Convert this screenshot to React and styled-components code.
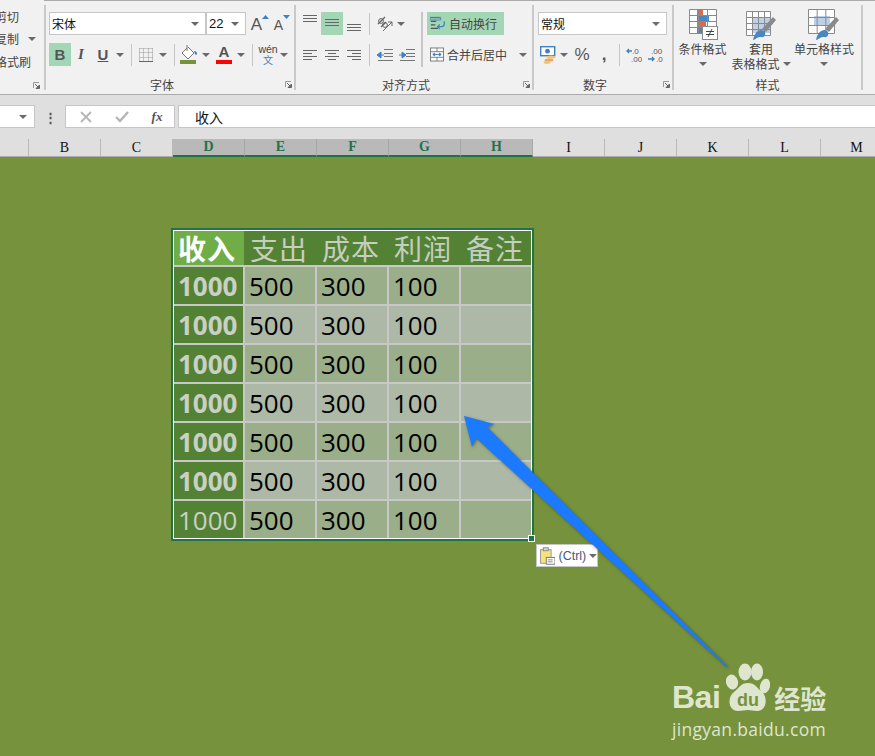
import React from 'react';
import styled, { createGlobalStyle } from 'styled-components';

const CJK = `"Noto Sans CJK SC", "Liberation Sans", sans-serif`;

const Global = createGlobalStyle`
  html, body {
    margin: 0;
    padding: 0;
    background: #76923c;
  }
  * { box-sizing: border-box; }
`;

const Page = styled.div`
  width: 875px;
  height: 756px;
  overflow: hidden;
  display: flex;
  flex-direction: column;
  font-family: ${CJK};
`;

/* ribbon */
const Ribbon = styled.div`
  height: 95px;
  flex-shrink: 0;
  display: flex;
  background: #f1f1f1;
  border-bottom: 1px solid #ababab;
`;
const ClipGroup = styled.div`
  width: 44px;
  flex-shrink: 0;
  overflow: hidden;
  display: flex;
  flex-direction: column;
  padding-top: 5px;
`;
const ClipItem = styled.div`
  height: 22.5px;
  margin-left: -5px;
  display: flex;
  align-items: center;
  font-size: 12px;
  color: #444;
  white-space: nowrap;
`;
const ClipFoot = styled.div`
  margin-top: auto;
  height: 18px;
  display: flex;
  justify-content: flex-end;
  align-items: center;
  padding-right: 2px;
`;
const Tabs = styled.div`
  flex: 1;
  display: flex;
  border-top: 1px solid #ababab;
`;
const Divider = styled.div`
  width: 2px;
  flex-shrink: 0;
  margin: 4px 0 4px;
  background: #c9c9c9;
`;
const Group = styled.div`
  width: ${p => p.$w}px;
  flex-shrink: 0;
  display: flex;
  flex-direction: column;
`;
const Body = styled.div`
  display: flex;
  padding: 11px 0 0 ${p => p.$pad || 0}px;
  height: 74px;
`;
const Col = styled.div`
  display: flex;
  flex-direction: column;
  gap: 8px;
`;
const Row = styled.div`
  display: flex;
  align-items: center;
  height: 23px;
`;
const Foot = styled.div`
  height: 18px;
  display: flex;
  align-items: center;
`;
const GroupLabel = styled.div`
  flex: 1;
  text-align: center;
  font-size: 12px;
  color: #444;
`;
const LauncherBox = styled.svg`
  width: 7px;
  height: 7px;
  margin: 0 2px 0 7px;
  flex-shrink: 0;
`;
const Select = styled.div`
  width: ${p => p.$w}px;
  height: 23px;
  flex-shrink: 0;
  background: #fff;
  border: 1px solid #c6c6c6;
  display: flex;
  align-items: center;
  justify-content: space-between;
  padding: 0 6px 0 2px;
  font-size: 12px;
  color: #111;
`;
const SizeText = styled.span`
  font-family: "Liberation Sans", sans-serif;
  font-size: 13px;
`;
const Tool = styled.div`
  width: ${p => p.$w}px;
  height: 23px;
  margin-left: ${p => p.$ml || 0}px;
  flex-shrink: 0;
  display: flex;
  align-items: center;
  justify-content: center;
  color: #555;
  background: ${p => (p.$on ? '#a3d6b5' : 'transparent')};
`;
const LetterTool = styled(Tool)`
  font-family: ${p => (p.$serif ? '"Liberation Serif"' : '"Liberation Sans"')}, sans-serif;
  font-size: ${p => p.$size || 15}px;
  font-weight: ${p => (p.$bold ? 700 : 400)};
  font-style: ${p => (p.$italic ? 'italic' : 'normal')};
  text-decoration: ${p => (p.$under ? 'underline' : 'none')};
`;
const GrowLetter = styled.span`
  font-family: "Liberation Sans", sans-serif;
  font-size: ${p => p.$size}px;
  color: #555;
  line-height: 1;
  margin-top: 2px;
`;
const ColorLetter = styled.div`
  display: flex;
  flex-direction: column;
  align-items: center;
  font-family: "Liberation Sans", sans-serif;
  font-weight: 700;
  font-size: 15px;
  line-height: 14px;
  color: #555;
`;
const ColorBar = styled.div`
  width: 16px;
  height: 4px;
  margin-top: 1px;
  background: ${p => p.$color};
`;
const WenStack = styled.div`
  display: flex;
  flex-direction: column;
  align-items: center;
  line-height: 1;
`;
const WenTop = styled.span`
  font-family: "Liberation Sans", sans-serif;
  font-size: 10.5px;
  color: #444;
`;
const WenBottom = styled.span`
  font-size: 10px;
  color: #3f80c0;
`;
const VSep = styled.div`
  width: 1px;
  height: 22px;
  flex-shrink: 0;
  background: #c6c6c6;
`;
const TallSep = styled.div`
  width: 2px;
  height: 55px;
  flex-shrink: 0;
  background: #c6c6c6;
`;
const WrapCol = styled(Col)`
  padding-left: 4px;
`;
const TextTool = styled.div`
  width: ${p => p.$w}px;
  height: 23px;
  display: flex;
  align-items: center;
  gap: 3px;
  padding-left: 3px;
  font-size: 12px;
  color: #444;
  white-space: nowrap;
  background: ${p => (p.$on ? '#a3d6b5' : 'transparent')};
`;
const MergeCaret = styled.span`
  display: flex;
  margin-left: 9px;
`;
const BigRow = styled.div`
  display: flex;
  height: 74px;
  margin-top: -3px;
`;
const BigButton = styled.div`
  width: ${p => p.$w}px;
  flex-shrink: 0;
  display: flex;
  flex-direction: column;
  align-items: center;
  font-size: 12px;
  color: #444;
  line-height: 15px;
`;
const BigIcon = styled.svg`
  width: 32px;
  height: 32px;
  flex-shrink: 0;
`;
const BigLine = styled.div`
  height: 15px;
  display: flex;
  align-items: center;
  justify-content: center;
  gap: 3px;
  white-space: nowrap;
`;

/* formula bar */
const FormulaBar = styled.div`
  height: 33px;
  flex-shrink: 0;
  display: flex;
  align-items: flex-end;
  background: #dfdfdf;
`;
const NameBox = styled.div`
  width: 35px;
  height: 23px;
  background: #fff;
  border: 1px solid #c6c6c6;
  border-left: 0;
  display: flex;
  align-items: center;
  justify-content: flex-end;
  padding-right: 7px;
`;
const Grip = styled.div`
  width: 30px;
  height: 23px;
  display: flex;
  align-items: center;
  justify-content: center;
  color: #555;
  font-size: 13px;
  font-weight: 700;
`;
const FxBox = styled.div`
  width: 110px;
  height: 23px;
  background: #fff;
  border: 1px solid #c6c6c6;
  display: flex;
  align-items: center;
  justify-content: space-around;
  padding-left: 2px;
  flex-shrink: 0;
`;
const FxText = styled.span`
  font-family: "Liberation Serif", serif;
  font-style: italic;
  font-weight: 700;
  font-size: 13px;
  color: #555;
`;
const FormulaInput = styled.div`
  flex: 1;
  height: 23px;
  margin-left: 3px;
  background: #fff;
  border: 1px solid #c6c6c6;
  border-right: 0;
  display: flex;
  align-items: center;
  padding-left: 16px;
  font-size: 14px;
  color: #111;
`;

/* column heads */
const ColHeads = styled.div`
  height: 29px;
  flex-shrink: 0;
  display: flex;
  align-items: flex-end;
  background: #dfdfdf;
`;
const ColCell = styled.div`
  width: ${p => p.$w || 72}px;
  height: 18px;
  flex-shrink: 0;
  display: flex;
  align-items: center;
  justify-content: center;
  font-family: "Liberation Serif", serif;
  font-size: 14px;
  font-weight: ${p => (p.$on ? 700 : 400)};
  color: ${p => (p.$on ? '#217346' : '#111')};
  background: ${p => (p.$on ? '#b9b9b9' : 'transparent')};
  border-right: 1px solid ${p => (p.$on ? '#a8a8a8' : '#b9b9b9')};
  border-bottom: ${p => (p.$on ? '2px solid #217346' : '1px solid #ababab')};
`;

/* sheet */
const Sheet = styled.div`
  flex: 1;
  position: relative;
  background: #76923c;
  padding: 71px 0 0 171px;
`;
const Selection = styled.div`
  position: relative;
  width: 363px;
  border: 2px solid #217346;
`;
const TableGrid = styled.div`
  border: 1px solid #fff;
  display: grid;
  grid-template-columns: 69px repeat(4, 70px);
  grid-template-rows: 34px repeat(7, 37px);
  gap: 2px;
  background: #c8c8c8;
`;
const HeadRow = styled.div`
  grid-column: 1 / -1;
  display: grid;
  grid-template-columns: 70px repeat(4, 72px);
  background: #548235;
`;
const HeadCell = styled.div`
  display: flex;
  align-items: center;
  padding-left: ${p => (p.$on ? 4 : 6)}px;
  font-size: 28px;
  line-height: 1;
  letter-spacing: 1px;
  font-weight: ${p => (p.$on ? 700 : 400)};
  color: ${p => (p.$on ? '#fff' : '#c6cec0')};
  background: ${p => (p.$on ? '#70ad47' : 'transparent')};
  white-space: nowrap;
`;
const Cell = styled.div`
  display: flex;
  align-items: center;
  padding-left: 4px;
  font-family: "Open Sans", sans-serif;
  font-size: 26px;
  color: #000;
  background: ${p => (p.$alt ? '#adb9a6' : '#9bae8a')};
`;
const FirstCell = styled(Cell)`
  font-weight: ${p => (p.$thin ? 400 : 700)};
  color: #cbd0c6;
  background: #548235;
`;
const Handle = styled.div`
  position: absolute;
  right: -3px;
  bottom: -3px;
  width: 7px;
  height: 7px;
  background: #217346;
  border: 1px solid #fff;
`;
const PasteTag = styled.div`
  position: absolute;
  left: 363px;
  top: 314px;
  width: 62px;
  height: 23px;
  background: #fff;
  border: 1px solid #c6c6c6;
  display: flex;
  align-items: center;
  gap: 3px;
  padding-left: 3px;
  font-family: "Liberation Sans", sans-serif;
  font-size: 12.5px;
  color: #4a5a78;
  white-space: nowrap;
`;
const ArrowLayer = styled.svg`
  position: absolute;
  left: 0;
  top: 0;
  width: 875px;
  height: 599px;
  pointer-events: none;
`;
const Watermark = styled.div`
  position: absolute;
  left: 672px;
  top: 506px;
  width: 156px;
  display: flex;
  flex-direction: column;
  color: #dfe6cf;
`;
const LogoRow = styled.div`
  display: flex;
  align-items: flex-end;
  height: 49px;
`;
const LogoBai = styled.span`
  font-family: "Liberation Sans", sans-serif;
  font-weight: 700;
  font-size: 32px;
  line-height: 29px;
  margin-right: 6px;
  letter-spacing: -0.5px;
`;
const Paw = styled.svg`
  width: 44px;
  height: 49px;
  flex-shrink: 0;
`;
const LogoJing = styled.span`
  font-size: 26px;
  font-weight: 700;
  line-height: 29px;
  margin-left: 4px;
  white-space: nowrap;
`;
const LogoUrl = styled.div`
  font-family: "Open Sans", sans-serif;
  font-size: 17.5px;
  line-height: 20px;
  margin-top: 7px;
  letter-spacing: 0.3px;
  white-space: nowrap;
`;

const Caret = () => (
  <svg width="8" height="4" viewBox="0 0 8 4">
    <path d="M0 0h8L4 4z" fill="#6a6a6a" />
  </svg>
);
const Launcher = () => (
  <LauncherBox viewBox="0 0 7 7">
    <path d="M.5 6V.5H6" fill="none" stroke="#999" />
    <path d="M2 2l3 3M6.5 3v3.5H3z" stroke="#666" fill="#666" />
  </LauncherBox>
);
const Lines = ({ rows, w = 14 }) => (
  <svg width={w} height="23" viewBox={`0 0 ${w} 23`}>
    {rows.map(([x1, x2, y]) => (
      <path key={y} d={`M${x1} ${y + 0.5}H${x2}`} stroke="#666" />
    ))}
  </svg>
);
const Tri = ({ up, color = '#3f80c0' }) => (
  <svg width="7" height="4" viewBox="0 0 7 4" style={{ alignSelf: 'flex-start', marginTop: 3 }}>
    <path d={up ? 'M0 4h7L3.5 0z' : 'M0 0h7L3.5 4z'} fill={color} />
  </svg>
);
const BorderIcon = () => (
  <svg width="14" height="14" viewBox="0 0 14 14">
    <path d="M.5.5h13M.5 4.5h13M.5 9.5h13M.5.5v13M4.5.5v13M9.5.5v13M13.5.5v13" stroke="#999" strokeDasharray="1 1" />
    <path d="M0 13.5h14" stroke="#666" />
  </svg>
);
const FillIcon = () => (
  <svg width="18" height="19" viewBox="0 0 18 19">
    <path d="M8 2l6 6-6 6-6-6 5-5" fill="#fff" stroke="#777" />
    <path d="M7 0v6" stroke="#777" />
    <path d="M14 6c2 0 3 1 3 3 0 1-2 1-2 0z" fill="#3f80c0" />
    <rect x="0" y="15" width="16" height="4" fill="#76923c" />
  </svg>
);
const OrientIcon = () => (
  <svg width="18" height="18" viewBox="0 0 18 18">
    <path d="M2 9l7-7M5 12l5-5" stroke="#666" strokeWidth="1.4" fill="none" />
    <circle cx="5" cy="6" r="2.4" fill="none" stroke="#666" />
    <circle cx="9" cy="10" r="2.4" fill="none" stroke="#666" />
    <path d="M7 16l9-9M12 7h4v4" stroke="#666" fill="none" />
  </svg>
);
const IndentIcon = ({ right }) => (
  <svg width="16" height="12" viewBox="0 0 16 12">
    <path d="M7 .5h9M7 4.5h9M7 7.5h9M1 11.5h15" stroke="#777" />
    {right
      ? <path d="M0 6h3V3l4 3-4 3V6" fill="#3f80c0" stroke="#3f80c0" />
      : <path d="M7 6H4V3L0 6l4 3V6" fill="#3f80c0" stroke="#3f80c0" />}
  </svg>
);
const WrapIcon = () => (
  <svg width="16" height="16" viewBox="0 0 18 16">
    <path d="M1 1h10M1 5h6M1 9h5M1 13h8" stroke="#555" strokeWidth="1.3" fill="none" />
    <path d="M0 .5h12v3H0z" fill="none" stroke="#3f80c0" />
    <path d="M16 5v3c0 2-1 3-3 3H9M11 8.5L8.5 11l2.5 2.5" stroke="#3f80c0" strokeWidth="1.4" fill="none" />
  </svg>
);
const MergeIcon = () => (
  <svg width="15" height="15" viewBox="0 0 15 15">
    <rect x=".5" y=".5" width="14" height="14" fill="#fff" stroke="#777" />
    <path d="M.5 4.5h14M.5 10.5h14M7.5.5v4M7.5 10.5v4" stroke="#777" />
    <path d="M3 7.5h9M3 7.5l2-1.5v3zM12 7.5l-2-1.5v3z" stroke="#3f80c0" fill="#3f80c0" />
  </svg>
);
const CurrencyIcon = () => (
  <svg width="18" height="18" viewBox="0 0 18 18">
    <rect x=".7" y=".7" width="14" height="9" fill="#fff" stroke="#3f80c0" strokeWidth="1.4" />
    <circle cx="7.5" cy="5.2" r="2.4" fill="#3f80c0" />
    <ellipse cx="11" cy="11" rx="4.5" ry="1.6" fill="#f2c27a" />
    <ellipse cx="9" cy="14" rx="4.5" ry="1.6" fill="#e9a85a" />
    <ellipse cx="7" cy="16.5" rx="3.5" ry="1.4" fill="#f2c27a" />
  </svg>
);
const DecIcon = ({ more }) => (
  <svg width="16" height="16" viewBox="0 0 16 16" fontFamily="Liberation Sans, sans-serif" fontSize="8" fill="#555">
    {more ? (
      <>
        <text x="6" y="7">.0</text>
        <text x="5" y="15">.00</text>
        <path d="M6 4H1M3 2L1 4l2 2" stroke="#3f80c0" fill="none" strokeWidth="1.3" />
      </>
    ) : (
      <>
        <text x="3" y="7">.00</text>
        <text x="8" y="15">.0</text>
        <path d="M0 12h6M4 10l2 2-2 2" stroke="#3f80c0" fill="none" strokeWidth="1.3" />
      </>
    )}
  </svg>
);
const Cross = () => (
  <svg width="12" height="12" viewBox="0 0 12 12">
    <path d="M1 1l10 10M11 1L1 11" stroke="#b5b5b5" strokeWidth="1.8" />
  </svg>
);
const Check = () => (
  <svg width="14" height="12" viewBox="0 0 14 12">
    <path d="M1 6l4 4 8-9" stroke="#b5b5b5" strokeWidth="2.4" fill="none" />
  </svg>
);
const GridLines = ({ x, y, w, h, cols, rows }) => (
  <path
    d={
      [...Array(cols + 1)].map((_, i) => `M${x + (i * w) / cols} ${y}v${h}`).join('') +
      [...Array(rows + 1)].map((_, i) => `M${x} ${y + (i * h) / rows}h${w}`).join('')
    }
    stroke="#8a8a8a"
    fill="none"
  />
);
const CondIcon = () => (
  <BigIcon viewBox="0 0 32 32">
    <rect x="2.5" y=".5" width="27" height="24" fill="#fff" />
    <rect x="10" y="1" width="6" height="6" fill="#e0694a" />
    <rect x="10" y="7" width="12" height="6" fill="#4a86c0" />
    <rect x="10" y="13" width="9" height="6" fill="#e0694a" />
    <rect x="10" y="19" width="5" height="6" fill="#4a86c0" />
    <GridLines x={2.5} y={0.5} w={27} h={24} cols={3} rows={4} />
    <rect x="15.5" y="17.5" width="15" height="13" fill="#fff" stroke="#8a8a8a" />
    <path d="M19 22.5h8M19 25.5h8M25 20l-4 8" stroke="#444" fill="none" />
  </BigIcon>
);
const TableIcon = () => (
  <BigIcon viewBox="0 0 32 32">
    <rect x="1.5" y="2.5" width="24" height="24" fill="#fff" />
    <rect x="7" y="8" width="18" height="16" fill="#bcd0e6" />
    <GridLines x={1.5} y={2.5} w={24} h={24} cols={4} rows={4} />
    <path d="M17 20L28 8l3 3-10 12z" fill="#8a8a8a" />
    <path d="M8 31c1-5 3-9 8-10 3 0 5 2 4 5-1 3-3 2-5 2-3 0-5 3-7 3z" fill="#4a86c0" />
  </BigIcon>
);
const CellStyleIcon = () => (
  <BigIcon viewBox="0 0 32 32">
    <rect x=".5" y=".5" width="26" height="24" fill="#fff" />
    <rect x="6" y="7" width="16" height="10" fill="#bcd0e6" />
    <GridLines x={0.5} y={0.5} w={26} h={24} cols={3} rows={3} />
    <path d="M17 20L28 8l3 3-10 12z" fill="#8a8a8a" />
    <path d="M8 31c1-5 3-9 8-10 3 0 5 2 4 5-1 3-3 2-5 2-3 0-5 3-7 3z" fill="#4a86c0" />
  </BigIcon>
);
const ClipIcon = () => (
  <svg width="16" height="18" viewBox="0 0 16 18">
    <rect x=".5" y="2.5" width="11" height="14" fill="#f8e27a" stroke="#999" />
    <rect x="3.5" y=".5" width="5" height="3" fill="#ddd" stroke="#888" />
    <rect x="6.5" y="10.5" width="9" height="7" fill="#fff" stroke="#777" />
    <path d="M8 13h5M8 15h5" stroke="#888" />
  </svg>
);

const heads = ['支出', '成本', '利润', '备注'];
const rowsData = [0, 1, 2, 3, 4, 5, 6];
const columns = ['D', 'E', 'F', 'G', 'H'];

export default function App() {
  return (
    <Page>
      <Global />
      <Ribbon>
        <ClipGroup>
          <ClipItem>剪切</ClipItem>
          <ClipItem>复制<Tool $w={14} $ml={6}><Caret /></Tool></ClipItem>
          <ClipItem>格式刷</ClipItem>
          <ClipFoot><Launcher /></ClipFoot>
        </ClipGroup>
        <Tabs>
          <Divider />
          <Group $w={248}>
            <Body $pad={3}>
              <Col>
                <Row>
                  <Select $w={157}>宋体<Caret /></Select>
                  <Select $w={40}><SizeText>22</SizeText><Caret /></Select>
                  <Tool $w={22} $ml={3}><GrowLetter $size={17}>A</GrowLetter><Tri up /></Tool>
                  <Tool $w={22}><GrowLetter $size={14}>A</GrowLetter><Tri /></Tool>
                </Row>
                <Row>
                  <LetterTool $w={22} $on $bold>B</LetterTool>
                  <LetterTool $w={20} $serif $italic $bold>I</LetterTool>
                  <LetterTool $w={24} $under $bold>U</LetterTool>
                  <Tool $w={10}><Caret /></Tool>
                  <Tool $w={12}><VSep /></Tool>
                  <Tool $w={18}><BorderIcon /></Tool>
                  <Tool $w={16}><Caret /></Tool>
                  <Tool $w={6}><VSep /></Tool>
                  <Tool $w={24}><FillIcon /></Tool>
                  <Tool $w={10}><Caret /></Tool>
                  <Tool $w={26}><ColorLetter>A<ColorBar $color="#ff0000" /></ColorLetter></Tool>
                  <Tool $w={8}><Caret /></Tool>
                  <Tool $w={14}><VSep /></Tool>
                  <Tool $w={18}><WenStack><WenTop>wén</WenTop><WenBottom>文</WenBottom></WenStack></Tool>
                  <Tool $w={14}><Caret /></Tool>
                </Row>
              </Col>
            </Body>
            <Foot><GroupLabel>字体</GroupLabel><Launcher /></Foot>
          </Group>
          <Divider />
          <Group $w={236}>
            <Body $pad={5}>
              <Col>
                <Row>
                  <Tool $w={18}><Lines rows={[[0, 14, 3], [0, 14, 6], [0, 14, 9]]} /></Tool>
                  <Tool $w={22} $ml={2} $on><Lines rows={[[0, 14, 7], [0, 14, 10], [0, 14, 13]]} /></Tool>
                  <Tool $w={22}><Lines rows={[[0, 14, 12], [0, 14, 15], [0, 14, 18]]} /></Tool>
                  <Tool $w={8}><VSep /></Tool>
                  <Tool $w={24}><OrientIcon /></Tool>
                  <Tool $w={8}><Caret /></Tool>
                  <Tool $w={16} />
                </Row>
                <Row>
                  <Tool $w={18}><Lines rows={[[0, 14, 7], [0, 9, 10], [0, 14, 13], [0, 9, 16]]} /></Tool>
                  <Tool $w={26}><Lines rows={[[0, 14, 7], [3, 11, 10], [0, 14, 13], [3, 11, 16]]} /></Tool>
                  <Tool $w={18}><Lines rows={[[0, 14, 7], [5, 14, 10], [0, 14, 13], [5, 14, 16]]} /></Tool>
                  <Tool $w={12}><VSep /></Tool>
                  <Tool $w={20}><IndentIcon /></Tool>
                  <Tool $w={24}><IndentIcon right /></Tool>
                </Row>
              </Col>
              <TallSep />
              <WrapCol>
                <Row>
                  <TextTool $w={77} $on><WrapIcon />自动换行</TextTool>
                </Row>
                <Row>
                  <TextTool $w={100}><MergeIcon />合并后居中<MergeCaret><Caret /></MergeCaret></TextTool>
                </Row>
              </WrapCol>
            </Body>
            <Foot><GroupLabel>对齐方式</GroupLabel><Launcher /></Foot>
          </Group>
          <Divider />
          <Group $w={138}>
            <Body $pad={4}>
              <Col>
                <Row>
                  <Select $w={129}>常规<Caret /></Select>
                </Row>
                <Row>
                  <Tool $w={22}><CurrencyIcon /></Tool>
                  <Tool $w={8}><Caret /></Tool>
                  <LetterTool $w={28} $size={17}>%</LetterTool>
                  <LetterTool $w={16} $size={17} $bold>,</LetterTool>
                  <Tool $w={14}><VSep /></Tool>
                  <Tool $w={16}><DecIcon more /></Tool>
                  <Tool $w={22} $ml={3}><DecIcon /></Tool>
                </Row>
              </Col>
            </Body>
            <Foot><GroupLabel>数字</GroupLabel><Launcher /></Foot>
          </Group>
          <Divider />
          <Group $w={187}>
            <Body>
              <BigRow>
                <BigButton $w={57}>
                  <CondIcon />
                  <BigLine>条件格式</BigLine>
                  <BigLine><Caret /></BigLine>
                </BigButton>
                <BigButton $w={60}>
                  <TableIcon />
                  <BigLine>套用</BigLine>
                  <BigLine>表格格式<Caret /></BigLine>
                </BigButton>
                <BigButton $w={66}>
                  <CellStyleIcon />
                  <BigLine>单元格样式</BigLine>
                  <BigLine><Caret /></BigLine>
                </BigButton>
              </BigRow>
            </Body>
            <Foot><GroupLabel>样式</GroupLabel></Foot>
          </Group>
          <Divider />
        </Tabs>
      </Ribbon>

      <FormulaBar>
        <NameBox><Caret /></NameBox>
        <Grip>⋮</Grip>
        <FxBox>
          <Cross />
          <Check />
          <FxText>fx</FxText>
        </FxBox>
        <FormulaInput>收入</FormulaInput>
      </FormulaBar>

      <ColHeads>
        <ColCell $w={29} />
        <ColCell>B</ColCell>
        <ColCell>C</ColCell>
        {columns.map(c => <ColCell key={c} $on>{c}</ColCell>)}
        <ColCell>I</ColCell>
        <ColCell>J</ColCell>
        <ColCell>K</ColCell>
        <ColCell>L</ColCell>
        <ColCell>M</ColCell>
      </ColHeads>

      <Sheet>
        <Selection>
          <TableGrid>
            <HeadRow>
              <HeadCell $on>收入</HeadCell>
              {heads.map(h => <HeadCell key={h}>{h}</HeadCell>)}
            </HeadRow>
            {rowsData.map(i => (
              <React.Fragment key={i}>
                <FirstCell $thin={i === 6}>1000</FirstCell>
                <Cell $alt={i % 2 === 1}>500</Cell>
                <Cell $alt={i % 2 === 1}>300</Cell>
                <Cell $alt={i % 2 === 1}>100</Cell>
                <Cell $alt={i % 2 === 1} />
              </React.Fragment>
            ))}
          </TableGrid>
          <Handle />
          <PasteTag><ClipIcon />(Ctrl)<Caret /></PasteTag>
        </Selection>

        <ArrowLayer viewBox="0 157 875 599">
          <path
            d="M464 416L494 424L487 427L727.5 666L726.5 667L476 438L472 447Z"
            fill="#1b7aff"
            style={{ filter: 'drop-shadow(1px 1px 1.5px rgba(40,50,20,.55))' }}
          />
        </ArrowLayer>

        <Watermark>
          <LogoRow>
            <LogoBai>Bai</LogoBai>
            <Paw viewBox="0 0 44 49">
              <ellipse cx="6" cy="19" rx="6" ry="7.5" fill="#dfe6cf" transform="rotate(-15 6 19)" />
              <ellipse cx="19" cy="9" rx="6.5" ry="8.5" fill="#dfe6cf" />
              <ellipse cx="31" cy="9" rx="6" ry="8.5" fill="#dfe6cf" />
              <ellipse cx="39" cy="23" rx="5" ry="7.5" fill="#dfe6cf" transform="rotate(15 39 23)" />
              <path d="M22 20c7 0 9 5 14 9 6 5 5 19-5 19-4 0-6-1-9-1s-6 1-10 1C2 48 1 34 8 29c5-4 7-9 14-9z" fill="#dfe6cf" />
              <text x="22" y="43" textAnchor="middle" fontFamily="Liberation Sans, sans-serif" fontWeight="700" fontSize="18" fill="#76923c">du</text>
            </Paw>
            <LogoJing>经验</LogoJing>
          </LogoRow>
          <LogoUrl>jingyan.baidu.com</LogoUrl>
        </Watermark>
      </Sheet>
    </Page>
  );
}
